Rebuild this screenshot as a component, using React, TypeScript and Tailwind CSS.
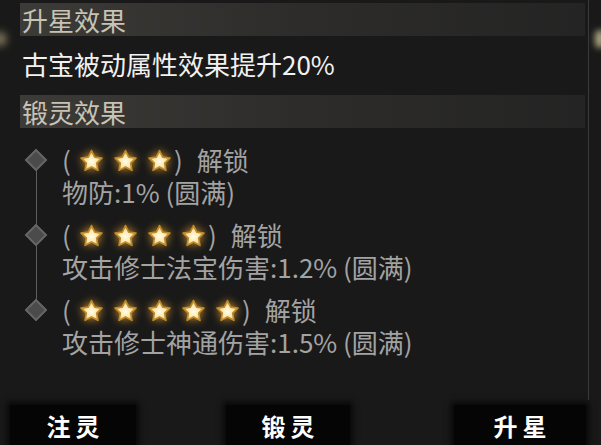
import React from 'react';

const font = { fontFamily: '"Noto Sans CJK SC", "Noto Sans", sans-serif' };

function Star() {
  return (
    <svg width="25" height="25" viewBox="0 0 24 24" className="drop-shadow-[0_0_4px_#c98f2c]">
      <defs>
        <radialGradient id="starFill" cx="50%" cy="55%" r="55%">
          <stop offset="0%" stopColor="#fffcea" />
          <stop offset="55%" stopColor="#fbe7aa" />
          <stop offset="100%" stopColor="#dfa640" />
        </radialGradient>
      </defs>
      <path
        d="M12 2.5L15.06 8.79L21.99 9.76L16.95 14.61L18.17 21.49L12 18.2L5.83 21.49L7.05 14.61L2.01 9.76L8.94 8.79Z"
        fill="url(#starFill)"
        stroke="#c08a2a"
        strokeWidth="1.6"
        strokeLinejoin="round"
      />
    </svg>
  );
}

function Diamond() {
  return (
    <div className="w-[16px] h-[16px] rotate-45 bg-[#4b4b4b] border-2 border-[#656565]" />
  );
}

const rows = [
  { stars: 3, text: '物防:1% (圆满)' },
  { stars: 4, text: '攻击修士法宝伤害:1.2% (圆满)' },
  { stars: 5, text: '攻击修士神通伤害:1.5% (圆满)' },
];

function SectionBar({ title }: { title: string }) {
  return (
    <div className="h-[33px] bg-linear-to-r from-[#3c3b38] via-[#2d2c2a] to-[#242424] flex items-center px-[2px]">
      <span className="text-[26px] leading-none text-[#c8c3b4]">{title}</span>
    </div>
  );
}

export default function App() {
  return (
    <div className="relative w-[601px] h-[445px] bg-[#191919] overflow-hidden flex flex-col" style={font}>
      {/* edge glows */}
      <div className="absolute left-[-6px] top-[32px] w-[12px] h-[14px] rounded-full bg-[#d8c690] blur-[4px] opacity-60" />
      <div className="absolute right-[-4px] top-[30px] w-[10px] h-[18px] rounded-full bg-[#efe2b0] blur-[3px] opacity-70" />
      <div className="absolute left-[588px] top-0 w-px h-[400px] bg-[#3a3a3a]" />

      <div className="pl-[20px] pr-[16px] pt-[3px]">
        <SectionBar title="升星效果" />
        <div className="mt-[11px] h-[34px] flex items-center px-[2px] text-[26px] leading-none text-[#f1f1f1]">
          古宝被动属性效果提升20%
        </div>
        <div className="mt-[14px]">
          <SectionBar title="锻灵效果" />
        </div>

        <div className="relative mt-[16px]">
          <div className="absolute left-[16px] top-[16px] w-px h-[150px] bg-[#5e5e5e]" />
          {rows.map((r, i) => (
            <div key={i} className="flex mb-[11px]">
              <div className="w-[42px] h-[32px] flex items-center justify-center pr-[10px] relative z-10">
                <Diamond />
              </div>
              <div className="text-[#a3a3a3] text-[26px] leading-none">
                <div className="h-[32px] flex items-center">
                  <span className="w-[12px]">(</span>
                  {Array.from({ length: r.stars }).map((_, j) => (
                    <span key={j} className="w-[34px] flex justify-center">
                      <Star />
                    </span>
                  ))}
                  <span className="ml-[-2px]">)</span>
                  <span className="ml-[14px]">解锁</span>
                </div>
                <div className="h-[32px] flex items-center">{r.text}</div>
              </div>
            </div>
          ))}
        </div>
      </div>

      <div className="mt-auto flex h-[40px] text-white text-[24px] font-semibold tracking-[5px] leading-none">
        <div className="ml-[10px] w-[126px] bg-[#050505] shadow-[0_0_6px_3px_rgba(0,0,0,0.7)] flex justify-center pt-[9px] pl-[5px]">
          注灵
        </div>
        <div className="ml-[90px] w-[124px] bg-[#050505] shadow-[0_0_6px_3px_rgba(0,0,0,0.7)] flex justify-center pt-[9px] pl-[5px]">
          锻灵
        </div>
        <div className="ml-[104px] w-[132px] bg-[#050505] shadow-[0_0_6px_3px_rgba(0,0,0,0.7)] flex justify-center pt-[9px] pl-[5px]">
          升星
        </div>
      </div>
    </div>
  );
}
